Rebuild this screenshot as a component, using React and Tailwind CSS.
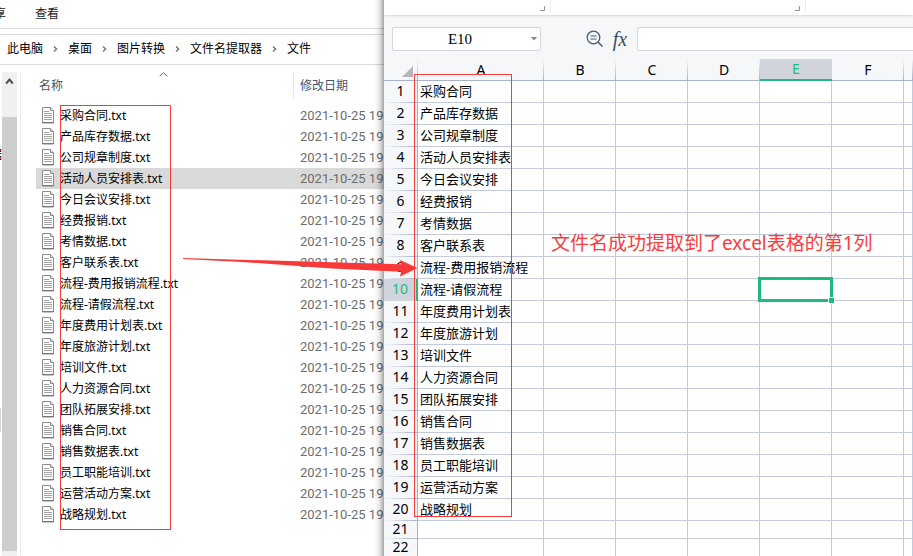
import React from "react";

const files = [
  "采购合同",
  "产品库存数据",
  "公司规章制度",
  "活动人员安排表",
  "今日会议安排",
  "经费报销",
  "考情数据",
  "客户联系表",
  "流程-费用报销流程",
  "流程-请假流程",
  "年度费用计划表",
  "年度旅游计划",
  "培训文件",
  "人力资源合同",
  "团队拓展安排",
  "销售合同",
  "销售数据表",
  "员工职能培训",
  "运营活动方案",
  "战略规划",
];

const crumbs = ["此电脑", "桌面", "图片转换", "文件名提取器", "文件"];
const columns = ["A", "B", "C", "D", "E", "F", ""];
const rows = [...files, "", ""];

function FileIcon() {
  return (
    <svg width="12" height="17" viewBox="0 0 12 17" className="shrink-0" aria-hidden="true">
      <path d="M.5.5H8.5L11.5 3.5V16H.5Z" fill="#fff" stroke="#8c8c8c" />
      <path d="M8.5.5V3.5H11.5" fill="#e4e4e4" stroke="#8c8c8c" />
      <path d="M0 15.5H12" stroke="#777" />
      <path d="M2 4.5H7M2 6.5H10M2 8.5H10M2 10.5H10M2 12.5H10" stroke="#a2a2a2" />
    </svg>
  );
}

function Chevron() {
  return (
    <svg width="5" height="8" viewBox="0 0 5 8" aria-hidden="true">
      <path d="M1 1.5L3.6 4L1 6.5" fill="none" stroke="#777" strokeWidth="1.5" />
    </svg>
  );
}

function Explorer() {
  return (
    <section className="relative flex w-[384px] shrink-0 flex-col overflow-hidden bg-white text-xs text-[#1a1a1a]">
      <nav className="flex h-[29px] shrink-0 items-center border-b border-[#dadbdc]">
        <button className="flex w-[6px] justify-end overflow-hidden whitespace-nowrap">共享</button>
        <button className="ml-[29px]">查看</button>
      </nav>
      <nav className="mt-[5px] flex h-[31px] shrink-0 items-center gap-[10px] border-y border-[#d9d9d9] pb-px pl-[7px]">
        {crumbs.map((c, i) => (
          <React.Fragment key={c}>
            {i > 0 && <Chevron />}
            <a href="#" className="text-black">{c}</a>
          </React.Fragment>
        ))}
      </nav>
      <div className="flex min-h-0 flex-1 pt-[7px]">
        <div className="flex w-[2px] shrink-0 flex-col overflow-hidden pt-[75px]">
          <span className="flex h-4 justify-end whitespace-nowrap text-black">数据</span>
          <span className="mt-[245px] h-6 w-px bg-[#d4d4d4]" />
        </div>
        <div className="flex w-[15px] shrink-0 flex-col items-center bg-[#f0f0f0] pb-[5px]">
          <svg width="9" height="45" viewBox="0 0 9 45" className="shrink-0" aria-hidden="true">
            <path d="M1.2 11.5L4.5 7.5L7.8 11.5" fill="none" stroke="#505050" strokeWidth="2" />
          </svg>
          <div className="w-full flex-1 bg-[#cdcdcd]" />
        </div>
        <table className="ml-[3px] block flex-1 border-l border-[#ededed] pl-[15px]">
          <thead className="block">
            <tr className="flex h-[33px]">
              <th className="relative h-[27px] w-[258px] shrink-0 border-r border-[#e5e5e5] pl-[3px] text-left leading-[27px] font-normal text-[#44546a]">
                名称
                <svg width="9" height="5" viewBox="0 0 9 5" className="absolute top-0 left-[123px]" aria-hidden="true">
                  <path d="M.7 4.3L4.5.7L8.3 4.3" fill="none" stroke="#666" />
                </svg>
              </th>
              <th className="pl-[6px] leading-[27px] font-normal whitespace-nowrap text-[#44546a]">修改日期</th>
            </tr>
          </thead>
          <tbody className="block">
            {files.map((f, i) => (
              <tr key={f} className={"flex h-[21px] items-center " + (i === 3 ? "bg-[#d9d9d9]" : "")}>
                <td className="flex w-[264px] shrink-0 items-center gap-[6px] pl-[6px] whitespace-nowrap text-black">
                  <FileIcon />
                  <span>{f}.txt</span>
                </td>
                <td className="font-[Roboto,'Noto_Sans',sans-serif] text-[13px] whitespace-nowrap text-[#6d6d6d]">
                  2021-10-25 19
                </td>
              </tr>
            ))}
          </tbody>
        </table>
      </div>
      <div className="pointer-events-none absolute inset-y-0 right-0 w-[10px] bg-linear-to-r from-transparent via-black/8 to-black/35" />
    </section>
  );
}

function GroupCorner() {
  return (
    <svg width="5" height="5" viewBox="0 0 5 5" aria-hidden="true">
      <path d="M4.5 0V4.5H0" fill="none" stroke="#8993b5" />
    </svg>
  );
}

function Sheet() {
  return (
    <section className="flex min-w-0 flex-1 flex-col overflow-hidden bg-[#f6f7f9] text-black">
      <div className="flex h-[15px] shrink-0 bg-white shadow-sm">
        <div className="flex h-[13px] w-[167px] items-end justify-end border-r border-[#ececf0] pr-[5px] pb-[2px]">
          <GroupCorner />
        </div>
        <div className="flex h-[13px] w-[255px] items-end justify-end border-r border-[#ececf0] pr-[5px] pb-[2px]">
          <GroupCorner />
        </div>
      </div>
      <div className="flex h-[44px] shrink-0 items-start pt-[12px] pl-2">
        <div className="flex h-6 w-[149px] items-center rounded-xs border border-[#d4d7df] bg-white">
          <input
            aria-label="单元格"
            defaultValue="E10"
            className="w-[134px] text-center font-['Liberation_Serif','Noto_Sans_CJK_SC',serif] text-[15px] outline-none"
          />
          <button aria-label="展开" className="flex w-[13px] justify-center">
            <svg width="6" height="4" viewBox="0 0 6 4" aria-hidden="true">
              <path d="M0 0H6L3 3.6Z" fill="#7b85a0" />
            </svg>
          </button>
        </div>
        <button aria-label="查找" className="mt-[3px] ml-[45px]">
          <svg width="18" height="18" viewBox="0 0 18 18" fill="none" stroke="#4a5a75" aria-hidden="true">
            <circle cx="7.5" cy="7.5" r="6.3" strokeWidth="1.3" />
            <path d="M12 12L16.5 16.5" strokeWidth="1.5" />
            <path d="M4.5 6H10.5M4.5 9H10.5" strokeWidth="1.2" />
          </svg>
        </button>
        <button
          aria-label="插入函数"
          className="ml-2 w-4 font-['Liberation_Serif',serif] text-xl leading-6 text-[#3f4c66] italic"
        >
          fx
        </button>
        <input aria-label="编辑栏" className="ml-[9px] h-6 min-w-0 flex-1 rounded-l-xs border border-r-0 border-[#d4d7df] bg-white outline-none" />
      </div>
      <table className="w-full table-fixed border-separate border-spacing-0">
        <colgroup>
          <col className="w-[34px]" />
          <col className="w-[126px]" />
          <col className="w-[72px]" />
          <col className="w-[72px]" />
          <col className="w-[72px]" />
          <col className="w-[72px]" />
          <col className="w-[72px]" />
          <col />
        </colgroup>
        <thead>
          <tr className="h-[22px]">
            <th className="border-b border-[#a9b1cc] bg-[linear-gradient(to_bottom,transparent,#a9b1cc)] bg-[length:1px_100%] bg-right bg-no-repeat p-0">
              <svg width="11" height="11" viewBox="0 0 11 11" className="mt-[3px] ml-[18px]" aria-hidden="true">
                <path d="M11 0V11H0Z" fill="#b7b7b7" />
              </svg>
            </th>
            {columns.map((c, i) => (
              <th
                key={i}
                className={
                  c === "E"
                    ? "border-b-2 border-[#1fbb7d] bg-[#d1d4dc] p-0 text-sm leading-5 font-normal text-[#1fbb7d]"
                    : "border-b border-[#a9b1cc] bg-[linear-gradient(to_bottom,transparent,#a9b1cc)] bg-[length:1px_100%] bg-right bg-no-repeat p-0 text-sm leading-5 font-normal"
                }
              >
                {c}
              </th>
            ))}
          </tr>
        </thead>
        <tbody>
          {rows.map((name, r) => (
            <tr key={r} className={r < 20 ? "h-[22px]" : "h-[18px]"}>
              <th
                className={
                  "p-0 align-top text-sm font-normal " +
                  (r < 20 ? "leading-5 " : "leading-4 ") +
                  (r === 9
                    ? "border-r-2 border-[#1fbb7d] bg-[#d1d4dc] text-[#1fbb7d]"
                    : "border-r border-[#a9b1cc] bg-[linear-gradient(to_right,transparent,#a9b1cc)] bg-[length:100%_1px] bg-bottom bg-no-repeat")
                }
              >
                {r + 1}
              </th>
              {columns.map((c, i) => (
                <td
                  key={i}
                  className={
                    "relative border-r border-b border-[#c3cadc] bg-white p-0 align-top text-[13px] whitespace-nowrap " +
                    (r < 20 ? "leading-5 " : "leading-4 ") +
                    (i === 0 ? "pl-[2px]" : "")
                  }
                >
                  {i === 0 ? name : null}
                  {i === 4 && r === 9 && (
                    <span className="absolute -inset-[2px] z-10 border-3 border-[#1fbb7d]">
                      <span className="absolute -right-[5px] -bottom-[5px] size-[7px] border border-white bg-[#1fbb7d]" />
                    </span>
                  )}
                </td>
              ))}
            </tr>
          ))}
        </tbody>
      </table>
    </section>
  );
}

export default function App() {
  return (
    <main className="relative flex h-screen overflow-hidden bg-white font-['Noto_Sans','Noto_Sans_CJK_SC',sans-serif]">
      <Explorer />
      <Sheet />
      <div className="pointer-events-none absolute inset-0 z-20">
        <div className="absolute top-[105px] left-[60px] h-[425px] w-[111px] border border-[#f83c3c]" />
        <div className="absolute top-[74px] left-[414px] h-[443px] w-[98px] border border-[#f83c3c]" />
        <svg width="236" height="20" viewBox="0 0 236 20" className="absolute top-[258px] left-[182px]" aria-hidden="true">
          <path d="M1 0L90 2.6L219 6.3L218 2L235.5 10L218 18.5L219 13.8L150 10.5L60 4L1 1Z" fill="#fb3838" />
        </svg>
        <p className="absolute top-[229px] left-[551px] text-[19px] leading-7 whitespace-nowrap text-[#f83c3c]">
          文件名成功提取到了excel表格的第1列
        </p>
      </div>
    </main>
  );
}
